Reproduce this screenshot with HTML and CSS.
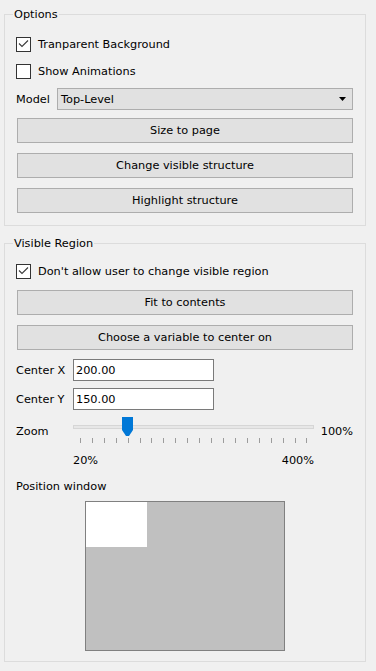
FILE: index.html
```html
<!DOCTYPE html>
<html lang="en">
<head>
<meta charset="utf-8">
<title>Options</title>
<link rel="stylesheet" href="styles.css">
</head>
<body>
<div class="panel">
  <section class="group g1">
    <div class="gtitle">Options</div>
    <label class="check-row r-first">
      <span class="cb"><svg width="13" height="13" viewBox="0 0 13 13"><path d="M2 5.5 L5 8.5 L11 2.5" fill="none" stroke="#3c3c3c" stroke-width="1.1"/></svg></span>
      <span>Tranparent Background</span>
    </label>
    <label class="check-row r-next">
      <span class="cb"></span>
      <span>Show Animations</span>
    </label>
    <div class="field-row model-row">
      <span class="lbl lbl-model">Model</span>
      <div class="combo">
        <span>Top-Level</span>
        <svg width="7" height="4" viewBox="0 0 7 4"><polygon points="0,0 7,0 3.5,4" fill="#000"/></svg>
      </div>
    </div>
    <div class="btn btn-first">Size to page</div>
    <div class="btn btn-next">Change visible structure</div>
    <div class="btn btn-next">Highlight structure</div>
  </section>

  <section class="group g2">
    <div class="gtitle">Visible Region</div>
    <label class="check-row r-first2">
      <span class="cb"><svg width="13" height="13" viewBox="0 0 13 13"><path d="M2 5.5 L5 8.5 L11 2.5" fill="none" stroke="#3c3c3c" stroke-width="1.1"/></svg></span>
      <span>Don't allow user to change visible region</span>
    </label>
    <div class="btn btn-first">Fit to contents</div>
    <div class="btn btn-next">Choose a variable to center on</div>
    <div class="field-row cx-row">
      <span class="lbl lbl-wide">Center X</span>
      <div class="input">200.00</div>
    </div>
    <div class="field-row cy-row">
      <span class="lbl lbl-wide">Center Y</span>
      <div class="input">150.00</div>
    </div>
    <div class="field-row zoom-row">
      <span class="lbl lbl-wide">Zoom</span>
      <div class="slider">
        <div class="track"></div>
        <div class="ticks">
          <i></i><i></i><i></i><i></i><i></i><i></i><i></i><i></i><i></i><i></i>
          <i></i><i></i><i></i><i></i><i></i><i></i><i></i><i></i><i></i><i></i>
        </div>
        <svg class="thumb" width="11" height="19" viewBox="0 0 11 19"><path d="M0 0 H11 V13 L7 19 H4 L0 13 Z" fill="#0078d7"/></svg>
      </div>
      <span class="pct">100%</span>
    </div>
    <div class="scale">
      <span>20%</span>
      <span>400%</span>
    </div>
    <div class="pos-label">Position window</div>
    <div class="posbox"><div class="view"></div></div>
  </section>
</div>
</body>
</html>
```
FILE: styles.css
```css
* { box-sizing: border-box; }
html, body { margin: 0; background: #f0f0f0; }
body {
  width: 376px;
  height: 671px;
  overflow: hidden;
  font-family: "DejaVu Sans", sans-serif;
  font-size: 11.3px;
  color: #000;
}
.panel { padding: 14px 10px 0 4px; }

.group {
  border: 1px solid #dcdcdc;
  display: flex;
  flex-direction: column;
  padding: 0 12px 12px 11px;
}
.g2 { margin-top: 17px; padding-bottom: 10px; }

.gtitle {
  align-self: flex-start;
  margin: -8px 0 0 -3px;
  padding: 0 1px;
  background: #f0f0f0;
  line-height: 15px;
  height: 15px;
}

.check-row {
  display: flex;
  align-items: center;
  gap: 7px;
  height: 21px;
}
.r-first { margin-top: 12px; }
.r-next { margin-top: 6px; }
.r-first2 { margin-top: 10px; }

.cb {
  width: 15px;
  height: 15px;
  border: 1px solid #333;
  background: #fff;
  display: flex;
}

.field-row { display: flex; align-items: center; }
.model-row { margin-top: 6px; height: 22px; }
.lbl-model { width: 41px; }
.lbl-wide { width: 57px; }

.combo {
  flex: 1;
  height: 22px;
  border: 1px solid #adadad;
  background: #e1e1e1;
  display: flex;
  align-items: center;
  justify-content: space-between;
  padding: 0 6px 0 3px;
}

.btn {
  margin-left: 1px;
  height: 25px;
  border: 1px solid #adadad;
  background: #e1e1e1;
  display: flex;
  align-items: center;
  justify-content: center;
}
.btn-first { margin-top: 8px; }
.btn-next { margin-top: 10px; }

.cx-row { margin-top: 9px; }
.cy-row { margin-top: 7px; }
.input {
  width: 141px;
  height: 22px;
  border: 1px solid #7a7a7a;
  background: #fff;
  padding: 0 2px;
  display: flex;
  align-items: center;
}

.zoom-row { margin-top: 7px; height: 28px; }
.slider {
  position: relative;
  width: 241px;
  height: 28px;
}
.track {
  margin-top: 8px;
  height: 4px;
  border: 1px solid #d6d6d6;
  background: #e7e7e7;
}
.ticks {
  margin-top: 9px;
  display: flex;
  justify-content: space-between;
  padding: 0 6px 0 7px;
}
.ticks i {
  display: block;
  width: 1px;
  height: 5px;
  background: #9c9c9c;
}
.thumb {
  position: absolute;
  top: 0;
  left: 49px;
}
.pct { margin-left: 7px; }

.scale {
  margin-top: 8px;
  margin-left: 57px;
  width: 241px;
  display: flex;
  justify-content: space-between;
  line-height: 15px;
}

.pos-label { margin-top: 11px; line-height: 15px; }
.posbox {
  margin-top: 7px;
  align-self: center;
  width: 200px;
  height: 150px;
  border: 1px solid #808080;
  background: #c0c0c0;
}
.view {
  width: 61px;
  height: 45px;
  background: #fff;
}
```
